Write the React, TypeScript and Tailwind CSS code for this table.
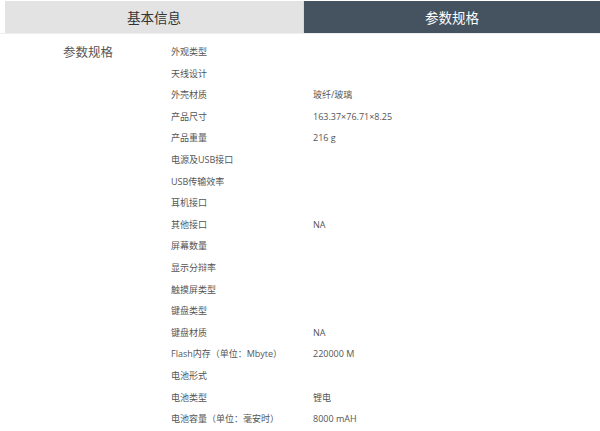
import React from "react";

const rows: [string, string][] = [
  ["外观类型", ""],
  ["天线设计", ""],
  ["外壳材质", "玻纤/玻璃"],
  ["产品尺寸", "163.37×76.71×8.25"],
  ["产品重量", "216 g"],
  ["电源及USB接口", ""],
  ["USB传输效率", ""],
  ["耳机接口", ""],
  ["其他接口", "NA"],
  ["屏幕数量", ""],
  ["显示分辩率", ""],
  ["触摸屏类型", ""],
  ["键盘类型", ""],
  ["键盘材质", "NA"],
  ["Flash内存（单位：Mbyte）", "220000 M"],
  ["电池形式", ""],
  ["电池类型", "锂电"],
  ["电池容量（单位：毫安时）", "8000 mAH"],
];

export default function App() {
  return (
    <div
      className="w-[600px] h-[431px] bg-white overflow-hidden"
      style={{ fontFamily: '"Noto Sans CJK SC", "Noto Sans", sans-serif' }}
    >
      <div className="flex pl-[5px] pt-[1px] border-b border-[#eeeeee]">
        <div className="w-[298px] h-[32px] bg-[#e3e3e3] flex items-center justify-center text-[13.5px] text-[#333333]">
          基本信息
        </div>
        <div className="w-[1px] h-[32px] bg-[#d8d8d8]" />
        <div className="flex-1 h-[32px] bg-[#44535f] flex items-center justify-center text-[13.5px] text-white">
          参数规格
        </div>
      </div>
      <div className="flex pt-[7px]">
        <div className="w-[171px] pl-[63px] text-[12.5px] text-[#555555] leading-[21.6px]">
          参数规格
        </div>
        <div
          className="flex flex-col"
          style={{ fontFamily: '"Open Sans", "Noto Sans CJK SC", sans-serif' }}
        >
          {rows.map(([k, v], i) => (
            <div key={i} className="flex h-[21.6px] items-center text-[9px] text-[#555555]">
              <div className="w-[142px]">{k}</div>
              <div>{v}</div>
            </div>
          ))}
        </div>
      </div>
    </div>
  );
}
